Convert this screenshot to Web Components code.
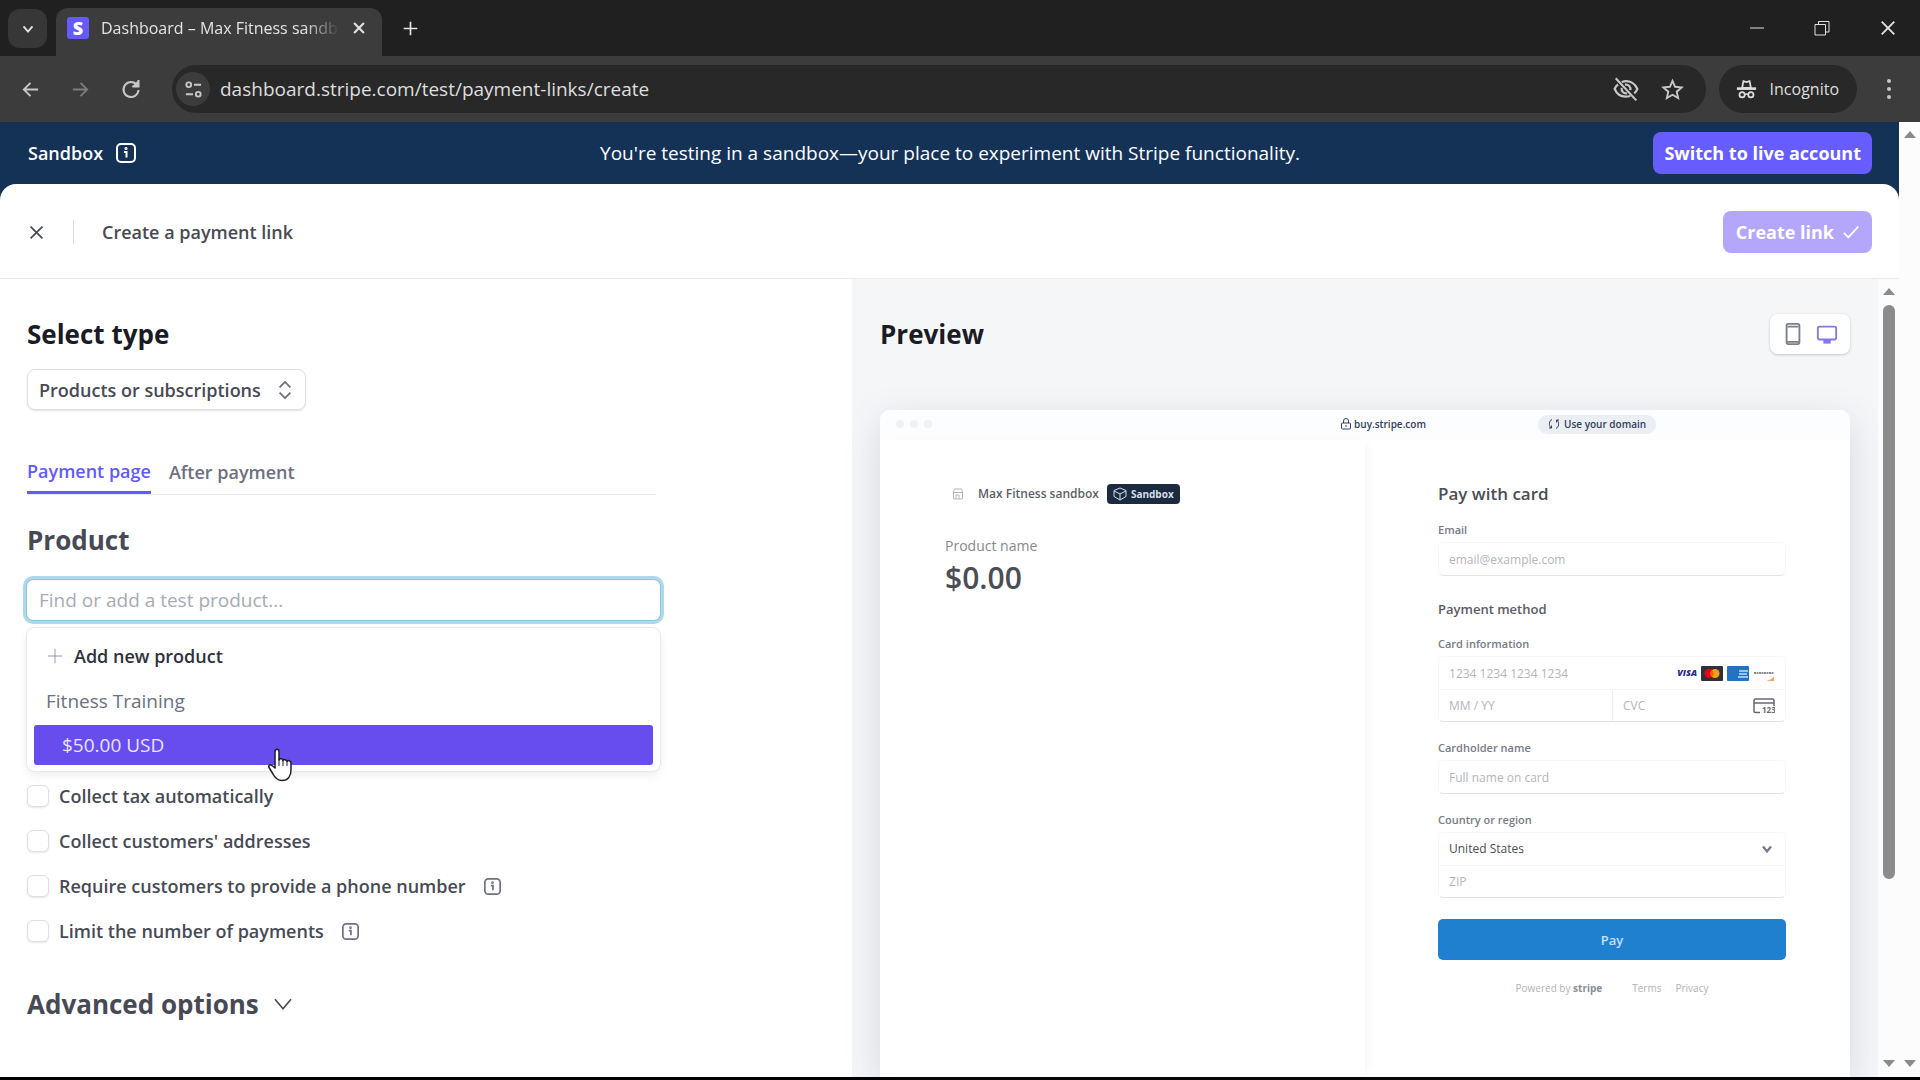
<!DOCTYPE html>
<html lang="en">
<head>
<meta charset="utf-8">
<title>Dashboard – Max Fitness sandbox</title>
<style>
    html, body {
        margin: 0;
        height: 100%;
    }
    body {
        font-family: "Open Sans", "Noto Sans", sans-serif;
        font-size: 18px;
        line-height: 24px;
        color: #474a55;
        background: #000;
        overflow: hidden;
    }
</style>
</head>
<body>
<app-window></app-window>

<script>
'use strict';

// shared by every component
const baseStyle = `
    * { box-sizing: border-box; }
    button, input, select {
        font: inherit;
        color: inherit;
        background: none;
        border: 0;
        margin: 0;
        padding: 0;
        outline: 0;
    }
    button { display: flex; align-items: center; justify-content: center; cursor: pointer; }
    select { appearance: none; }
    h1, h2, h3, p { margin: 0; }
    svg { display: block; flex: none; }
`;

function define(name, html) {
    const template = document.createElement('template');
    template.innerHTML = html.replace('<style>', '<style>' + baseStyle);
    customElements.define(name, class extends HTMLElement {
        constructor() {
            super();
            this.attachShadow({ mode: 'open' });
            this.shadowRoot.appendChild(template.content.cloneNode(true));
        }
    });
}

// name: [viewBox size, markup]
const icons = {
    'chevron-down': [20, '<path d="M5 7l5 6 5-6"/>'],
    'close': [20, '<path d="M3 3l14 14M17 3L3 17"/>'],
    'plus': [20, '<path d="M10 2v16M2 10h16"/>'],
    'back': [20, '<path d="M18 10H3M10 3l-7 7 7 7"/>'],
    'forward': [20, '<path d="M2 10h15M10 3l7 7-7 7"/>'],
    'reload': [20, '<path d="M16 6A7.500 7.500 0 1 0 17.500 11"/><path d="M17.500 1v7h-7z" fill="currentColor" stroke="none"/><path d="M17.500 1v6.500h-6"/>'],
    'tune': [20, '<circle cx="5" cy="5" r="2.500"/><path d="M10.500 5H18M2 15h7.500"/><circle cx="15" cy="15" r="2.500"/>'],
    'eye-off': [24, '<path d="M8 5.500C16 3 20.500 7.500 22.500 12c-.700 1.600-1.700 3-2.900 4M16 18.500C8 20.500 3.500 16.500 1.500 12c.700-1.700 1.800-3.200 3.200-4.300"/><path d="M11 8c3.500-.500 5.500 2 5 5M13 16c-3.500.500-5.500-2-5-5"/><path d="M2.500 2l19 20.500"/>'],
    'star': [24, '<path d="M12 3l2.700 6.200 6.800.600-5.100 4.500 1.500 6.700L12 17.500 6.100 21l1.500-6.700L2.500 9.800l6.800-.600z"/>'],
    'incognito': [24, '<path d="M7 10l1.500-7.500 3.500 1 3.500-1L17 10z"/><path d="M1 11h22" stroke-width="3"/><path d="M10 18c1-1 3-1 4 0"/><circle cx="7" cy="18" r="3"/><circle cx="17" cy="18" r="3"/>'],
    'dots': [20, '<g fill="currentColor" stroke="none"><circle cx="10" cy="2" r="2"/><circle cx="10" cy="10" r="2"/><circle cx="10" cy="18" r="2"/></g>'],
    'minimize': [16, '<path d="M1 8h14"/>'],
    'restore': [16, '<path d="M1 4.500h10.500V15H1zM4.500 4V1.500H15V12h-3"/>'],
    'info': [20, '<rect x="1" y="1" width="18" height="18" rx="4"/><path d="M8 9h2.500v5.500"/><circle cx="10" cy="5.500" r=".6"/>'],
    'check': [20, '<path d="M2 11l5 5L18 4"/>'],
    'sort': [20, '<path d="M4 7l6-6 6 6M4 13l6 6 6-6"/>'],
    'phone': [24, '<rect x="5" y="1" width="14" height="22" rx="2"/><path d="M5 20.500h14M6 4h12"/>'],
    'monitor': [24, '<rect x="2" y="4" width="20" height="14" rx="2"/><path d="M8 20.500h8" stroke-width="4"/>'],
    'lock': [12, '<rect x="1.500" y="5" width="9" height="6" rx="1"/><path d="M3.500 5V3a2.500 2.500 0 0 1 5 0v2M6 7v2"/>'],
    'refresh': [12, '<path d="M4 1.500C1 3 .5 7 3 10M1 10h2.500V7.500M8 10.500c3-1.500 3.500-5.500 1-8.500M11 2H8.500v2.500"/>'],
    'box': [14, '<path d="M7 1l6 2.500v6L7 13 1 9.500v-6zM1 4l6 3 6-3M7 7v6"/>'],
    'shop': [12, '<path d="M1.500 4l1-3h7l1 3v7h-9zM1.500 4.500h9M4 11V7h3v4"/>'],
};

class UiIcon extends HTMLElement {
    constructor() {
        super();
        this.attachShadow({ mode: 'open' });
    }
    connectedCallback() {
        const [box, markup] = icons[this.getAttribute('name')];
        const size = this.getAttribute('size') || 16;
        const weight = this.getAttribute('weight') || 2;
        this.shadowRoot.innerHTML = `
            <style>
                :host { display: inline-flex; flex: none; }
            </style>
            <svg width="${size}" height="${size}" viewBox="0 0 ${box} ${box}" fill="none"
                stroke="currentColor" stroke-width="${weight}" aria-hidden="true">${markup}</svg>
        `;
    }
}
customElements.define('ui-icon', UiIcon);

define('browser-tabs', `
    <style>
        :host {
            display: flex;
            align-items: flex-end;
            height: 56px;
            background: #202020;
            color: #e3e3e3;
        }
        .search {
            width: 39px;
            height: 39px;
            margin: 0 9px 8px 8px;
            border-radius: 12px;
            background: #373737;
        }
        .tab {
            display: flex;
            align-items: center;
            gap: 12px;
            width: 326px;
            height: 48px;
            padding: 0 16px 8px 11px;
            border-radius: 12px 12px 0 0;
            background: #3c3c3c;
        }
        .favicon {
            width: 22px;
            height: 22px;
            border-radius: 3px;
            background: #635bff;
            color: #fff;
            line-height: 22px;
            font-weight: 800;
            text-align: center;
        }
        .title {
            flex: 1;
            white-space: nowrap;
            font-size: 16px;
            -webkit-mask-image: linear-gradient(90deg, #000 85%, transparent);
            mask-image: linear-gradient(90deg, #000 85%, transparent);
        }
        .new { height: 39px; margin: 0 0 8px 20px; }
        .window {
            display: flex;
            align-self: stretch;
            gap: 49px;
            margin-left: auto;
            padding-right: 23px;
        }
    </style>
    <button class="search" aria-label="Search tabs"><ui-icon name="chevron-down" size="18"></ui-icon></button>
    <div class="tab">
        <span class="favicon">S</span>
        <span class="title">Dashboard – Max Fitness sandb</span>
        <button aria-label="Close tab"><ui-icon name="close" size="14" weight="3"></ui-icon></button>
    </div>
    <button class="new" aria-label="New tab"><ui-icon name="plus" size="17"></ui-icon></button>
    <div class="window">
        <button aria-label="Minimize"><ui-icon name="minimize" size="16" weight="1"></ui-icon></button>
        <button aria-label="Restore"><ui-icon name="restore" size="16" weight="1"></ui-icon></button>
        <button aria-label="Close"><ui-icon name="close" size="18" weight="2"></ui-icon></button>
    </div>
`);

define('browser-toolbar', `
    <style>
        :host {
            display: flex;
            align-items: center;
            height: 66px;
            padding: 0 21px;
            background: #3c3c3c;
            color: #c7c7c7;
        }
        .nav { display: flex; gap: 31px; margin-right: 31px; }
        .off { color: #7c7c7c; }
        .address {
            display: flex;
            flex: 1;
            align-items: center;
            height: 48px;
            margin-right: 13px;
            padding: 0 22px 0 4px;
            border-radius: 24px;
            background: #282828;
        }
        .site { width: 34px; height: 34px; margin-right: 10px; border-radius: 17px; background: #3c3c3c; }
        input { flex: 1; font-size: 19px; color: #dedede; }
        .actions { display: flex; gap: 22px; }
        .incognito {
            display: flex;
            align-items: center;
            gap: 13px;
            height: 48px;
            padding: 0 18px 0 17px;
            border-radius: 24px;
            background: #282828;
            color: #dedede;
            font-size: 16px;
        }
        .menu { margin-left: 22px; }
    </style>
    <div class="nav">
        <button aria-label="Back"><ui-icon name="back" size="19"></ui-icon></button>
        <button class="off" aria-label="Forward"><ui-icon name="forward" size="19"></ui-icon></button>
        <button aria-label="Reload"><ui-icon name="reload" size="20"></ui-icon></button>
    </div>
    <div class="address">
        <button class="site" aria-label="Site information"><ui-icon name="tune" size="19"></ui-icon></button>
        <input type="text" aria-label="Address" value="dashboard.stripe.com/test/payment-links/create">
        <div class="actions">
            <button aria-label="Tracking blocked"><ui-icon name="eye-off" size="26"></ui-icon></button>
            <button aria-label="Bookmark"><ui-icon name="star" size="23"></ui-icon></button>
        </div>
    </div>
    <div class="incognito"><ui-icon name="incognito" size="21"></ui-icon>Incognito</div>
    <button class="menu" aria-label="Menu"><ui-icon name="dots" size="20"></ui-icon></button>
`);

define('scroll-rail', `
    <style>
        :host {
            display: flex;
            flex-direction: column;
            align-items: center;
            flex: none;
            width: 21px;
            padding: 9px 0 10px;
            background: #fcfcfc;
        }
        .up, .down { border: 6px solid transparent; }
        .up { border-top: 0; border-bottom: 7px solid #8b8b8b; }
        .down { border-bottom: 0; border-top: 7px solid #8b8b8b; }
        .track { flex: 1; width: 12px; padding: 10px 0; }
        .thumb { display: none; height: 77%; border-radius: 6px; background: #8b8b8b; }
        :host([thumb]) .thumb { display: block; }
    </style>
    <div class="up"></div>
    <div class="track"><div class="thumb"></div></div>
    <div class="down"></div>
`);

define('sandbox-banner', `
    <style>
        :host {
            display: grid;
            grid-template-columns: 1fr auto 1fr;
            align-items: center;
            height: 62px;
            padding: 0 27px 0 28px;
            background: #143156;
            color: #fff;
        }
        .name { display: flex; align-items: center; gap: 13px; font-weight: 600; }
        p { font-size: 19px; }
        .live {
            justify-self: end;
            height: 42px;
            padding: 0 11px;
            border-radius: 8px;
            background: #675dff;
            font-weight: 700;
        }
    </style>
    <div class="name">Sandbox <ui-icon name="info" size="20"></ui-icon></div>
    <p>You're testing in a sandbox—your place to experiment with Stripe functionality.</p>
    <button class="live">Switch to live account</button>
`);

define('sheet-header', `
    <style>
        :host {
            display: flex;
            align-items: center;
            height: 95px;
            padding: 2px 27px 0 28px;
            border-bottom: 1px solid #ebebed;
        }
        h1 {
            flex: 1;
            margin-left: 28px;
            padding-left: 28px;
            border-left: 1px solid #d8dee4;
            font-size: 18px;
            font-weight: 600;
        }
        .create {
            gap: 8px;
            height: 42px;
            padding: 0 12px 0 13px;
            border-radius: 8px;
            background: #b3a6fb;
            color: #fff;
            font-weight: 700;
        }
    </style>
    <button aria-label="Close"><ui-icon name="close" size="17" weight="2"></ui-icon></button>
    <h1>Create a payment link</h1>
    <button class="create">Create link <ui-icon name="check" size="18"></ui-icon></button>
`);

define('check-option', `
    <style>
        :host { display: flex; align-items: center; gap: 18px; height: 24px; }
        label { display: flex; align-items: center; gap: 10px; font-weight: 600; }
        input {
            appearance: none;
            width: 22px;
            height: 22px;
            border: 1px solid #dcdfe4;
            border-radius: 6px;
            background: #fff;
            box-shadow: 0 1px 2px #0000001a;
        }
        ui-icon { display: none; color: #6c7080; }
        :host([info]) ui-icon { display: flex; }
    </style>
    <label><input type="checkbox"><slot></slot></label>
    <ui-icon name="info" size="17"></ui-icon>
`);

define('product-picker', `
    <style>
        :host { display: block; position: relative; font-size: 19px; }
        input {
            display: block;
            width: 100%;
            height: 40px;
            padding: 0 12px;
            border-radius: 6px;
            background: #fff;
            box-shadow: 0 0 0 1px #8fc3dc, 0 0 0 4px #aed8ec;
        }
        input::placeholder { color: #a6abb5; opacity: 1; }
        .menu {
            position: absolute;
            top: 100%;
            left: 0;
            right: 0;
            margin-top: 8px;
            padding: 6px 7px;
            border-radius: 8px;
            background: #fff;
            box-shadow: 0 0 0 1px #e8e9ec, 0 4px 10px #00000014;
        }
        .menu button { width: 100%; justify-content: flex-start; }
        .add { gap: 10px; height: 44px; padding: 0 12px; color: #30313d; font-size: 18px; font-weight: 600; }
        .add ui-icon { color: #87909f; }
        .group { height: 47px; padding: 0 12px; line-height: 46px; color: #6c7080; }
        .price {
            height: 40px;
            padding: 0 28px;
            border-radius: 3px;
            background: #674cee;
            color: #e9e4ff;
        }
        .pointer { position: absolute; top: 120px; left: 240px; }
    </style>
    <input type="text" aria-label="Product" placeholder="Find or add a test product...">
    <div class="menu">
        <button class="add"><ui-icon name="plus" size="18" weight="1"></ui-icon>Add new product</button>
        <div class="group">Fitness Training</div>
        <button class="price">$50.00 USD</button>
        <svg class="pointer" width="26" height="34" viewBox="0 0 26 34" fill="#fff" stroke="#1d1d2b" stroke-width="1.500" stroke-linejoin="round">
            <path d="M8 20V3.500C8 .5 12 .5 12 3.500V12c.500-2 4-1.500 4 .500.500-1.500 4-1 4 1 .500-1.500 4-1 4 1.500V22c0 6-3 10.500-9 10.500-5 0-7-2.500-9-6.500l-4-6.500c-1-2 1.500-3.500 3-2z"/>
            <path d="M12 11v7M16 12v6M20 13v5" stroke-width="1"/>
        </svg>
    </div>
`);

define('link-form', `
    <style>
        :host { display: block; padding: 39px 28px 24px 27px; }
        .column { max-width: 633px; }
        h2 { font-size: 26px; line-height: 32px; font-weight: 700; }
        h2.type { color: #1a1b25; }
        .select {
            display: inline-grid;
            align-items: center;
            height: 41px;
            margin-top: 19px;
            border: 1px solid #dcdfe4;
            border-radius: 8px;
            box-shadow: 0 1px 2px #0000001f;
            font-weight: 600;
        }
        .select select { grid-area: 1 / 1; padding: 0 44px 0 11px; height: 39px; }
        .select ui-icon { grid-area: 1 / 1; justify-self: end; margin-right: 11px; color: #6c7080; pointer-events: none; }
        .tabs {
            display: flex;
            gap: 18px;
            margin: 50px 4px 29px 0;
            border-bottom: 1px solid #ebebed;
        }
        .tabs button { height: 34px; padding-bottom: 10px; font-weight: 600; color: #6c7080; }
        .tabs .on { border-bottom: 3px solid #625afa; color: #625afa; }
        product-picker { margin-top: 24px; }
        .options { display: flex; flex-direction: column; gap: 21px; margin-top: 164px; }
        .advanced { gap: 8px; margin-top: 45px; }
    </style>
    <div class="column">
        <h2 class="type">Select type</h2>
        <div class="select">
            <select aria-label="Select type"><option>Products or subscriptions</option></select>
            <ui-icon name="sort" size="18" weight="2"></ui-icon>
        </div>
        <div class="tabs">
            <button class="on">Payment page</button>
            <button>After payment</button>
        </div>
        <h2>Product</h2>
        <product-picker></product-picker>
        <div class="options">
            <check-option>Collect tax automatically</check-option>
            <check-option>Collect customers' addresses</check-option>
            <check-option info>Require customers to provide a phone number</check-option>
            <check-option info>Limit the number of payments</check-option>
        </div>
        <button class="advanced"><h2>Advanced options</h2><ui-icon name="chevron-down" size="32" weight="1"></ui-icon></button>
    </div>
`);

define('card-brands', `
    <style>
        :host { display: flex; align-items: center; gap: 4px; }
        .visa { font-size: 9px; line-height: 12px; font-weight: 800; font-style: italic; color: #2d2a86; }
    </style>
    <span class="visa">VISA</span>
    <svg width="22" height="15" viewBox="0 0 22 15">
        <rect width="22" height="15" rx="1" fill="#31303a"/>
        <circle cx="8" cy="7.500" r="4.500" fill="#eb001b"/>
        <circle cx="14" cy="7.500" r="4.500" fill="#f79e1b"/>
        <path d="M11 4a4.500 4.500 0 0 1 0 7 4.500 4.500 0 0 1 0-7z" fill="#ff5f00"/>
    </svg>
    <svg width="22" height="15" viewBox="0 0 22 15">
        <rect width="22" height="15" rx="1" fill="#2173c4"/>
        <path d="M12 5h9M12 8h8M11 11h10" stroke="#c4def5" stroke-width="1.500"/>
    </svg>
    <svg width="22" height="15" viewBox="0 0 22 15">
        <path d="M1 7h20" stroke="#8b8d95" stroke-width="2" stroke-dasharray="2 .5"/>
        <path d="M21 10.500V15h-8c4-1 6-2.500 8-4.500z" fill="#f3a468"/>
    </svg>
`);

define('checkout-form', `
    <style>
        :host { display: block; font-size: 11px; line-height: 16px; color: #777b85; }
        h2 { font-size: 17px; line-height: 24px; font-weight: 600; color: #4b4d54; }
        h3 { margin: 24px 0 18px; font-size: 13px; line-height: 18px; font-weight: 600; color: #595c63; }
        label { display: block; margin-top: 18px; font-weight: 600; }
        h2 + label { margin-top: 16px; }
        .box {
            margin-top: 4px;
            border: 1px solid #f6f6f8;
            border-bottom-color: #e3e4e8;
            border-radius: 5px;
            background: #fff;
            font-size: 12px;
        }
        .row { display: flex; align-items: center; height: 32px; padding: 0 10px; }
        .row + .row { border-top: 1px solid #f6f6f8; }
        input, select { flex: 1; min-width: 0; height: 30px; }
        input::placeholder { color: #b3b5bb; opacity: 1; }
        select { color: #4b4d54; }
        .split { display: grid; grid-template-columns: minmax(0, 1fr) minmax(0, 1fr); padding: 0; }
        .split > * { padding: 0 10px; }
        .cvc { display: flex; align-items: center; border-left: 1px solid #ededf0; }
        .pay {
            width: 100%;
            height: 41px;
            margin-top: 21px;
            border-radius: 5px;
            background: #1f80d0;
            color: #c5e2fb;
            font-size: 13px;
            font-weight: 600;
        }
        .foot { display: flex; justify-content: center; gap: 14px; margin-top: 20px; font-size: 10px; color: #b0b2b9; }
        .foot p { margin-right: 16px; }
        .foot b { color: #8b8d95; }
        .foot a { color: inherit; text-decoration: none; }
    </style>
    <h2>Pay with card</h2>
    <label for="email">Email</label>
    <div class="box"><div class="row"><input id="email" type="email" placeholder="email@example.com"></div></div>
    <h3>Payment method</h3>
    <label for="card">Card information</label>
    <div class="box">
        <div class="row"><input id="card" type="text" placeholder="1234 1234 1234 1234"><card-brands></card-brands></div>
        <div class="row split">
            <input type="text" aria-label="Expiry" placeholder="MM / YY">
            <div class="cvc">
                <input type="text" aria-label="CVC" placeholder="CVC">
                <svg width="22" height="16" viewBox="0 0 22 16" fill="none" stroke="#666973">
                    <path d="M7 14.500H2.500a1.500 1.500 0 0 1-1.500-1.500V2.500A1.500 1.500 0 0 1 2.500 1h17A1.500 1.500 0 0 1 21 2.500V8M1 5h20" stroke-width="1.500"/>
                    <text x="9" y="15" font-size="8" font-weight="700" fill="#666973" stroke="none">123</text>
                </svg>
            </div>
        </div>
    </div>
    <label for="holder">Cardholder name</label>
    <div class="box"><div class="row"><input id="holder" type="text" placeholder="Full name on card"></div></div>
    <label for="country">Country or region</label>
    <div class="box">
        <div class="row">
            <select id="country"><option>United States</option></select>
            <ui-icon name="chevron-down" size="16" weight="3"></ui-icon>
        </div>
        <div class="row"><input type="text" aria-label="ZIP" placeholder="ZIP"></div>
    </div>
    <button class="pay">Pay</button>
    <div class="foot"><p>Powered by <b>stripe</b></p><a href="#terms">Terms</a><a href="#privacy">Privacy</a></div>
`);

define('link-preview', `
    <style>
        :host {
            display: flex;
            flex-direction: column;
            padding: 35px 28px 0 28px;
            background: #f5f6f8;
        }
        .head { display: flex; align-items: center; justify-content: space-between; margin-bottom: 56px; }
        h2 { font-size: 26px; line-height: 32px; font-weight: 700; color: #1a1b25; }
        .device {
            display: flex;
            align-items: center;
            gap: 12px;
            height: 40px;
            padding: 0 12px;
            border-radius: 8px;
            background: #fff;
            box-shadow: 0 1px 3px #00000033;
            color: #7b7f8b;
        }
        .device .on { color: #8577e6; }
        .page {
            display: flex;
            flex: 1;
            flex-direction: column;
            border-radius: 10px 10px 0 0;
            background: #fff;
            box-shadow: 0 10px 36px #3c425729;
        }
        .bar {
            display: grid;
            grid-template-columns: 1fr auto 1fr;
            align-items: center;
            height: 30px;
            padding: 0 20px 2px 16px;
            border-radius: 10px 10px 0 0;
            background: #fcfdff;
            font-size: 10px;
            line-height: 16px;
            font-weight: 600;
            color: #30405c;
        }
        .dots { display: flex; gap: 6px; }
        .dots i { width: 8px; height: 8px; border-radius: 4px; background: #eff1f4; }
        .url { display: flex; align-items: center; gap: 2px; margin-left: 40px; }
        .domain {
            justify-self: start;
            gap: 4px;
            height: 19px;
            margin-left: 112px;
            padding: 0 10px;
            border-radius: 10px;
            background: #ebeef3;
        }
        .body { display: grid; flex: 1; grid-template-columns: minmax(0, 1fr) minmax(0, 1fr); }
        .summary { padding: 44px 65px; box-shadow: 6px 0 12px -6px #00000010; }
        .shop { display: flex; align-items: center; gap: 8px; font-size: 12px; line-height: 20px; font-weight: 600; color: #5c5f67; }
        .shop .logo { margin: 0 6px 0 7px; color: #b4b6bc; }
        .badge {
            display: flex;
            align-items: center;
            gap: 4px;
            height: 20px;
            padding: 0 6px;
            border-radius: 4px;
            background: #1c2a40;
            color: #d5dfee;
            font-size: 10px;
            font-weight: 700;
        }
        .name { margin-top: 32px; font-size: 14px; line-height: 20px; color: #85888f; }
        .total { margin-top: 4px; font-size: 30px; line-height: 36px; font-weight: 600; color: #4b4d54; }
        checkout-form { padding: 42px 64px 0 73px; }
    </style>
    <div class="head">
        <h2>Preview</h2>
        <div class="device">
            <button aria-label="Mobile"><ui-icon name="phone" size="22"></ui-icon></button>
            <button class="on" aria-label="Desktop"><ui-icon name="monitor" size="22"></ui-icon></button>
        </div>
    </div>
    <div class="page">
        <div class="bar">
            <div class="dots"><i></i><i></i><i></i></div>
            <div class="url"><ui-icon name="lock" size="12" weight="1"></ui-icon>buy.stripe.com</div>
            <button class="domain"><ui-icon name="refresh" size="12" weight="1"></ui-icon>Use your domain</button>
        </div>
        <div class="body">
            <div class="summary">
                <div class="shop">
                    <ui-icon class="logo" name="shop" size="12" weight="1"></ui-icon>Max Fitness sandbox
                    <span class="badge"><ui-icon name="box" size="14" weight="1"></ui-icon>Sandbox</span>
                </div>
                <p class="name">Product name</p>
                <p class="total">$0.00</p>
            </div>
            <checkout-form></checkout-form>
        </div>
    </div>
`);

define('app-window', `
    <style>
        :host {
            display: flex;
            flex-direction: column;
            box-sizing: border-box;
            min-height: 100vh;
            padding-bottom: 3px;
        }
        .view { display: flex; flex: 1; }
        .page { display: flex; flex: 1; flex-direction: column; background: #143156; }
        .sheet {
            display: flex;
            flex: 1;
            flex-direction: column;
            border-radius: 16px 16px 0 0;
            background: #fff;
        }
        .content { display: flex; flex: 1; }
        .panes { display: grid; flex: 1; grid-template-columns: 49fr 59fr; }
    </style>
    <browser-tabs></browser-tabs>
    <browser-toolbar></browser-toolbar>
    <div class="view">
        <div class="page">
            <sandbox-banner></sandbox-banner>
            <div class="sheet">
                <sheet-header></sheet-header>
                <div class="content">
                    <div class="panes">
                        <link-form></link-form>
                        <link-preview></link-preview>
                    </div>
                    <scroll-rail thumb></scroll-rail>
                </div>
            </div>
        </div>
        <scroll-rail></scroll-rail>
    </div>
`);
</script>
</body>
</html>
